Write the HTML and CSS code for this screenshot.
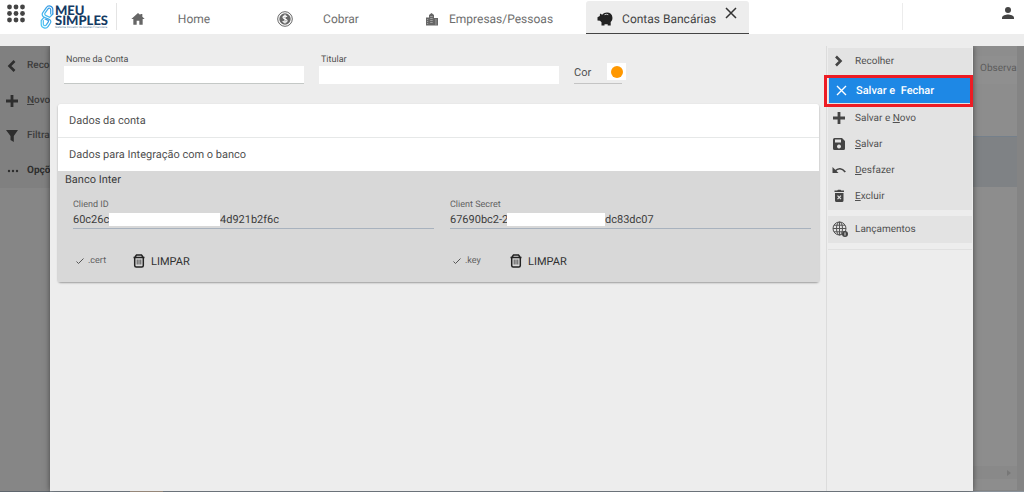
FILE: index.html
```
<!DOCTYPE html>
<html lang="pt-BR">

<head>
    <meta charset="UTF-8">
    <meta name="viewport" content="width=device-width, initial-scale=1.0">
    <title>Contas Bancárias</title>
    <link rel="stylesheet" href="styles.css">
</head>

<body>

    <header class="topbar">
        <button class="apps" type="button" aria-label="Menu">
            <svg viewBox="0 0 20 20" width="20" height="20">
                <g fill="#444">
                    <circle cx="3.5" cy="3" r="2.4"/><circle cx="10" cy="3" r="2.4"/><circle cx="16.5" cy="3" r="2.4"/>
                    <circle cx="3.5" cy="9.5" r="2.4"/><circle cx="10" cy="9.5" r="2.4"/><circle cx="16.5" cy="9.5" r="2.4"/>
                    <circle cx="3.5" cy="16" r="2.4"/><circle cx="10" cy="16" r="2.4"/><circle cx="16.5" cy="16" r="2.4"/>
                </g>
            </svg>
        </button>
        <a class="logo" href="#">
            <svg viewBox="0 0 14 24" width="14" height="24" fill="none" stroke-width="1.2" stroke-linecap="round">
                <defs>
                    <linearGradient id="logoBlue" x1="1" y1="0" x2="0" y2="1">
                        <stop offset="0" stop-color="#2f8fe0"/>
                        <stop offset="1" stop-color="#4cc8f4"/>
                    </linearGradient>
                </defs>
                <g stroke="url(#logoBlue)">
                    <path d="M12.800 9V4.500a3.500 3.500 0 0 0-6.500-1.800L2.800 7.600a3 3 0 0 0 1.400 4.600l5 2.200a2.500 2.500 0 0 1 1.200 3.600l-2.200 3.300a3.800 3.800 0 0 1-7-2V15.500l3-3.300"/>
                    <path d="M12.800 9 9.600 12.300l-4-1.900a1.500 1.500 0 0 1-.6-2.200l3-4.400a1.500 1.500 0 0 1 2.700.9V9"/>
                    <path d="M3.300 15.500v3.700a1.600 1.600 0 0 0 3 .7l2-3a1.200 1.200 0 0 0-.6-1.800L5 14"/>
                </g>
            </svg>
            <span class="logo-text">
                <span class="logo-name">MEU</span>
                <span class="logo-name">SIMPLES</span>
                <span class="logo-tag">Sistema Inovador de Gestão Financeira</span>
            </span>
        </a>
        <nav class="tabs">
            <a class="tab" href="#">
                <svg viewBox="0 0 24 24" width="16" height="16"><path d="M12 3 2 12h3v8.500h5V14.500h4v6h5V12h3l-3.500-3.200V4.500h-3v1.600z"/></svg>
                <span class="tab-label">Home</span>
            </a>
            <a class="tab" href="#">
                <svg viewBox="0 0 16 16" width="16" height="16">
                    <circle cx="8" cy="8" r="7.300" fill="none" stroke="#666"/>
                    <circle cx="8" cy="8" r="5.700"/>
                    <path d="M10 5.900C9.700 5 8.900 4.800 8 4.800c-1.100 0-2 .5-2 1.500 0 2.200 4.100 1.100 4.100 3.400 0 1-.9 1.500-2.100 1.500-1.100 0-2-.4-2.200-1.400M8 3.600v8.800" fill="none" stroke="#fff" stroke-width="1.200"/>
                </svg>
                <span class="tab-label">Cobrar</span>
            </a>
            <a class="tab" href="#">
                <svg viewBox="0 0 16 16" width="16" height="16">
                    <path d="M2 6.500h3V4l2.500-2L10 4v3h4v7.500H2z"/>
                    <path d="M3 8.500h1.200M3 10.500h1.200M3 12.500h1.200M6.200 5.500h2.500M6.200 7.500h2.500M6.200 9.500h2.500M6.200 11.500h2.500M11 9h1.800M11 11h1.800M11 13h1.800" stroke="#ddd" stroke-width=".5"/>
                </svg>
                <span class="tab-label">Empresas/Pessoas</span>
            </a>
            <a class="tab tab-active" href="#">
                <svg viewBox="0 0 16 16" width="16" height="16">
                    <path d="M.5 6.200 2.800 5 3 2.500l2.200 1.200C6.500 2.300 8 1.600 10 1.600c3 0 5.200 2 5.400 4.700.2 2-.4 3.500-1.700 4.800V14.500h-3v-1.300H7.500v1.300h-3v-3.200L3 9.800.5 9.500z"/>
                    <path d="M7.500 3.700q2-.8 3.800 0" stroke="#ededed" stroke-width=".8" fill="none"/>
                </svg>
                <span class="tab-label">Contas Bancárias</span>
                <button class="tab-close" type="button" aria-label="Fechar aba">
                    <svg viewBox="0 0 12 12" width="12" height="12"><path d="m1 1 10 10M11 1 1 11" stroke="#333" stroke-width="1.500"/></svg>
                </button>
            </a>
        </nav>
        <button class="user" type="button" aria-label="Usuário">
            <svg viewBox="0 0 12 12" width="12" height="12"><circle cx="6" cy="3" r="3"/><path d="M0 12v-1.500C0 8.500 4 7.400 6 7.400s6 1.100 6 3.100V12z"/></svg>
        </button>
    </header>

    <main class="workspace">
        <div class="rail">
            <div class="rail-item">
                <svg viewBox="0 0 14 14" width="14" height="14"><path d="M9.500 2 4.500 7l5 5" fill="none" stroke="#2e2e2e" stroke-width="2.600"/></svg>
                <span>Reco</span>
            </div>
            <div class="rail-item">
                <svg viewBox="0 0 14 14" width="14" height="14"><path d="M7 1v12M1 7h12" stroke="#2e2e2e" stroke-width="2.800"/></svg>
                <span><u>N</u>ovo</span>
            </div>
            <div class="rail-item">
                <svg viewBox="0 0 14 14" width="14" height="14"><path d="M1 1h12L8.800 7v6L5.500 11V7z" fill="#2e2e2e"/></svg>
                <span>Filtra</span>
            </div>
            <div class="rail-item rail-strong">
                <svg viewBox="0 0 14 14" width="14" height="14" fill="#2e2e2e"><circle cx="4" cy="7" r="1.200"/><circle cx="8" cy="7" r="1.200"/><circle cx="12" cy="7" r="1.200"/></svg>
                <span>Opçõ</span>
            </div>
        </div>

        <section class="dialog">
            <form class="account">
                <div class="fields">
                    <div class="field">
                        <label for="nome">Nome da Conta</label>
                        <input class="box box-line" type="text" id="nome">
                    </div>
                    <div class="field">
                        <label for="titular">Titular</label>
                        <input class="box" type="text" id="titular">
                    </div>
                    <div class="color-field">
                        <span>Cor</span>
                        <button class="swatch" type="button" aria-label="Cor"><i></i></button>
                    </div>
                </div>

                <div class="panels">
                    <button class="panel-head" type="button">Dados da conta</button>
                    <button class="panel-head" type="button">Dados para Integração com o banco</button>
                    <div class="panel-body">
                        <h2>Banco Inter</h2>
                        <div class="bank">
                            <div class="credential">
                                <label for="clientId">Cliend ID</label>
                                <div class="secret">
                                    <input class="key-start" type="text" id="clientId" value="60c26c">
                                    <span class="mask mask-long"></span>
                                    <input class="key-end" type="text" aria-label="Cliend ID final" value="4d921b2f6c">
                                </div>
                                <div class="file">
                                    <svg viewBox="0 0 8 8" width="8" height="8"><path d="m.5 4.500 2 2L7.500 1.500" fill="none" stroke="#555"/></svg>
                                    <span class="file-name">.cert</span>
                                    <button class="clear" type="button">
                                        <svg viewBox="0 0 12 14" width="12" height="14"><path d="M1.700 4v7.500q0 1.500 1.500 1.500h5.600q1.500 0 1.500-1.500V4M.5 3.500h11M2 3l1.500-2h5L10 3" fill="none" stroke="#222" stroke-width="1.500"/><path d="M4.200 5.500v5M6 5.500v5M7.800 5.500v5" stroke="#444" stroke-width=".9"/></svg>
                                        LIMPAR
                                    </button>
                                </div>
                            </div>
                            <div class="credential">
                                <label for="clientSecret">Client Secret</label>
                                <div class="secret">
                                    <input class="key-start key-wide" type="text" id="clientSecret" value="67690bc2-2">
                                    <span class="mask"></span>
                                    <input class="key-end" type="text" aria-label="Client Secret final" value="dc83dc07">
                                </div>
                                <div class="file">
                                    <svg viewBox="0 0 8 8" width="8" height="8"><path d="m.5 4.500 2 2L7.500 1.500" fill="none" stroke="#555"/></svg>
                                    <span class="file-name">.key</span>
                                    <button class="clear" type="button">
                                        <svg viewBox="0 0 12 14" width="12" height="14"><path d="M1.700 4v7.500q0 1.500 1.500 1.500h5.600q1.500 0 1.500-1.500V4M.5 3.500h11M2 3l1.500-2h5L10 3" fill="none" stroke="#222" stroke-width="1.500"/><path d="M4.200 5.500v5M6 5.500v5M7.800 5.500v5" stroke="#444" stroke-width=".9"/></svg>
                                        LIMPAR
                                    </button>
                                </div>
                            </div>
                        </div>
                    </div>
                </div>
            </form>

            <aside class="actions">
                <div class="group">
                    <button class="action" type="button">
                        <svg viewBox="0 0 14 14" width="14" height="14"><path d="m4 2.500 4.500 4.500L4 11.500" fill="none" stroke="#444" stroke-width="2.600"/></svg>
                        <span>Recolher</span>
                    </button>
                    <button class="action action-primary" type="button">
                        <svg viewBox="0 0 14 14" width="14" height="14"><path d="m4 2 9 9M13 2l-9 9" stroke="#fff" stroke-width="1.400"/></svg>
                        <span>Salvar e &nbsp;Fechar</span>
                    </button>
                    <button class="action" type="button">
                        <svg viewBox="0 0 14 14" width="14" height="14"><path d="M7 1v12M1 7h12" stroke="#444" stroke-width="2.800"/></svg>
                        <span>Salvar e <u>N</u>ovo</span>
                    </button>
                    <button class="action" type="button">
                        <svg viewBox="0 0 14 14" width="14" height="14"><path fill="#444" fill-rule="evenodd" d="M2.500 1H10l3 3v7.500q0 1.500-1.500 1.500h-9Q1 13 1 11.500v-9Q1 1 2.500 1zM3 2.500v3h6v-3zM7 7.500a2 2 0 1 0 .01 0z"/></svg>
                        <span><u>S</u>alvar</span>
                    </button>
                    <button class="action" type="button">
                        <svg viewBox="0 0 14 14" width="14" height="14"><path d="M.5 4v6h6z" fill="#444"/><path d="M3 8q5-5 10.300 1" fill="none" stroke="#444" stroke-width="1.700"/></svg>
                        <span><u>D</u>esfazer</span>
                    </button>
                    <button class="action" type="button">
                        <svg viewBox="0 0 14 14" width="14" height="14"><path d="M2.500 1.500h2.700L6 .8h2.500l.8.700H12V3H2.500zM3 4h8.500v7.500q0 1.500-1.500 1.500H4.500Q3 13 3 11.500z" fill="#444"/><path d="m5.500 6.700 3.500 3.500M9 6.700l-3.500 3.500" stroke="#e3e3e3" stroke-width="1.200"/></svg>
                        <span><u>E</u>xcluir</span>
                    </button>
                </div>
                <div class="group">
                    <button class="action" type="button">
                        <svg class="globe" viewBox="0 0 16 16" width="16" height="16">
                            <g fill="none" stroke="#555"><circle cx="7.500" cy="7.500" r="6.500"/><ellipse cx="7.500" cy="7.500" rx="3" ry="6.500"/><path d="M7.500 1v13M1 7.500h13M2 4.200h11M2 10.800h11"/></g>
                            <circle cx="13" cy="13" r="3" fill="#444"/><path d="M13 11.400v3.200" stroke="#ddd"/>
                        </svg>
                        <span>Lançamentos</span>
                    </button>
                </div>
                <hr>
            </aside>
        </section>

        <div class="behind">
            <div class="behind-head">Observa</div>
            <div class="behind-row"></div>
            <div class="behind-scroll"><svg viewBox="0 0 4 6" width="4" height="6"><path d="m0 0 4 3-4 3z" fill="#777"/></svg></div>
        </div>
    </main>
    <footer class="edge"></footer>

</body>

</html>
```
FILE: styles.css
```
* {
    box-sizing: border-box;
}

body {
    margin: 0;
    min-height: 100vh;
    display: flex;
    flex-direction: column;
    font-family: Roboto, "Liberation Sans", sans-serif;
    font-size: 11px;
    text-rendering: geometricPrecision;
    color: #505050;
    background: #ededed;
}

button,
input {
    font: inherit;
    color: inherit;
    background: none;
    border: 0;
    padding: 0;
    text-rendering: inherit;
}

button {
    cursor: pointer;
}

svg {
    flex: none;
    display: block;
}

/* top bar */
.topbar {
    position: relative;
    z-index: 2;
    height: 46px;
    display: flex;
    align-items: flex-start;
    background: #fff;
    border-bottom: 12px solid #ededed;
}

.apps {
    margin: 4px 14px 0 6px;
}

.logo {
    display: flex;
    gap: 1px;
    width: 77px;
    height: 27px;
    margin-top: 3px;
    padding-top: 2px;
    border-right: 1px solid #e4e4e4;
    text-decoration: none;
}

.logo-text {
    display: flex;
    flex-direction: column;
}

.logo-name {
    font-family: Lato, sans-serif;
    font-size: 13px;
    font-weight: 900;
    line-height: 10px;
    color: #143a63;
}

.logo-tag {
    font-size: 3px;
    line-height: 4px;
    color: #5a7d9a;
    white-space: nowrap;
}

.tabs {
    display: flex;
    flex: 1;
    margin-left: 2px;
}

.tab {
    position: relative;
    display: flex;
    align-items: center;
    gap: 9px;
    height: 33px;
    margin-top: 1px;
    padding: 3px 33px 0 11px;
    border-bottom: 1px solid transparent;
    font-size: 12px;
    color: #6e6e6e;
    text-decoration: none;
}

.tab svg {
    fill: #666;
}

.tab-label {
    min-width: 78px;
    text-align: center;
    white-space: nowrap;
}

.tab-active {
    background: #ededed;
    border-radius: 3px 3px 0 0;
    border-bottom-color: #444;
    color: #444;
}

.tab-active svg {
    fill: #222;
}

.tab-close {
    position: absolute;
    top: 6px;
    right: 12px;
}

.user {
    width: 122px;
    height: 27px;
    margin-top: 3px;
    padding: 4px 10px 0 0;
    display: flex;
    justify-content: flex-end;
    border-left: 1px solid #ececec;
}

.user svg {
    fill: #444;
}

/* workspace */
.workspace {
    flex: 1;
    display: grid;
    grid-template-columns: 50px 1fr 51px;
}

.rail {
    padding-top: 2px;
    background: linear-gradient(#808080 142px, #868686 142px);
    overflow: hidden;
}

.rail-item {
    display: flex;
    align-items: center;
    gap: 8px;
    height: 35px;
    padding-left: 5px;
    font-size: 10px;
    font-weight: 500;
    color: #3c3c3c;
    white-space: nowrap;
}

.rail-strong {
    font-weight: 700;
    color: #2e2e2e;
}

.dialog {
    position: relative;
    z-index: 1;
    display: flex;
    background: #ededed;
    box-shadow: 0 0 6px rgba(0, 0, 0, 0.5);
}

.account {
    flex: 1;
    min-width: 0;
    padding: 8px 7px 0 8px;
}

.fields {
    display: flex;
    align-items: flex-end;
    gap: 15px;
    height: 30px;
    padding-left: 6px;
}

.field {
    width: 240px;
}

.field label {
    display: block;
    padding-left: 2px;
    font-size: 9px;
    line-height: 11px;
}

.box {
    display: block;
    width: 100%;
    height: 18px;
    padding: 0 4px;
    background: #fff;
}

.box-line {
    border-bottom: 1px solid #c4c8c6;
}

.color-field {
    position: relative;
    width: 48px;
    height: 20px;
    line-height: 18px;
    border-bottom: 1px solid #c4c4c4;
}

.swatch {
    position: absolute;
    top: -1px;
    right: -4px;
    width: 19px;
    height: 17px;
    display: flex;
    align-items: center;
    justify-content: center;
    background: #fff;
}

.swatch i {
    width: 12px;
    height: 12px;
    border-radius: 50%;
    background: #ff9800;
}

.panels {
    margin-top: 20px;
    border-radius: 3px;
    box-shadow: 0 1px 2px rgba(0, 0, 0, 0.35);
}

.panel-head {
    display: block;
    width: 100%;
    height: 33px;
    padding-left: 11px;
    text-align: left;
    background: #fff;
}

.panel-head:first-child {
    height: 34px;
    border-bottom: 1px solid #e6e8e8;
    border-radius: 3px 3px 0 0;
}

.panel-body {
    height: 111px;
    padding: 0 8px 0 7px;
    background: #d8d8d8;
    color: #3c3c3c;
}

.panel-body h2 {
    margin: 0;
    font-size: 11px;
    font-weight: 400;
    line-height: 17px;
}

.bank {
    display: grid;
    grid-template-columns: 1fr 1fr;
    gap: 16px;
    padding: 12px 0 0 8px;
}

.credential label {
    display: block;
    font-size: 9px;
    line-height: 11px;
    color: #606060;
}

.secret {
    display: flex;
    align-items: center;
    height: 18px;
    border-bottom: 1px solid #a8b2be;
}

.secret input {
    height: 17px;
}

.key-start {
    width: 36px;
}

.key-wide {
    width: 57px;
}

.key-end {
    flex: 1;
    min-width: 0;
}

.mask {
    width: 98px;
    height: 13px;
    background: #fff;
}

.mask-long {
    width: 111px;
}

.file {
    display: flex;
    align-items: center;
    gap: 4px;
    margin-top: 22px;
    padding-left: 3px;
}

.file-name {
    width: 41px;
    font-size: 9px;
    color: #606060;
}

.clear {
    display: flex;
    align-items: center;
    gap: 6px;
    height: 20px;
    color: #303030;
}

/* side actions */
.actions {
    width: 147px;
    padding: 2px 1px 0;
    border-left: 1px solid #dcdcdc;
}

.group {
    display: flex;
    flex-direction: column;
    margin-bottom: 6px;
    padding-bottom: 1px;
    background: #e3e3e3;
}

.action {
    position: relative;
    display: flex;
    align-items: center;
    height: 26px;
    padding-left: 4px;
    font-size: 10px;
    text-align: left;
}

.action span {
    margin-left: 9px;
}

.action .globe {
    margin-right: -2px;
}

.action-primary {
    height: 25px;
    margin: 4px 2px 2px 1px;
    background: #1e88e5;
    color: #fff;
    font-size: 11px;
    font-weight: 500;
}

.action-primary::after {
    content: "";
    position: absolute;
    inset: -3px -3px -4px -5px;
    border: 3px solid #ed1c24;
}

.actions hr {
    margin: 0;
    border: 0;
    border-top: 1px solid #e0e0e0;
}

/* page under the dialog */
.behind {
    display: flex;
    flex-direction: column;
    padding: 10px 0 11px;
    background: #8d8d8d;
    border-right: 7px solid #848484;
    border-bottom: 1px solid #848484;
    overflow: hidden;
}

.behind-head {
    height: 28px;
    padding-left: 7px;
    font-size: 10px;
    line-height: 26px;
    color: #5c5c5c;
    background: #8f8f8f;
}

.behind-row {
    height: 51px;
    margin-top: 52px;
    background: #7f8285;
    border-top: 1px solid #75808b;
}

.behind-scroll {
    display: flex;
    align-items: center;
    justify-content: flex-end;
    height: 13px;
    margin-top: auto;
    padding-right: 6px;
    background: #898989;
}

.edge {
    height: 1px;
    background: linear-gradient(90deg, #5f666d 50px, #8a929b 50px, #8a929b 130px, #c0ad9c 130px, #c0ad9c 163px, #8a929b 163px);
}
```
